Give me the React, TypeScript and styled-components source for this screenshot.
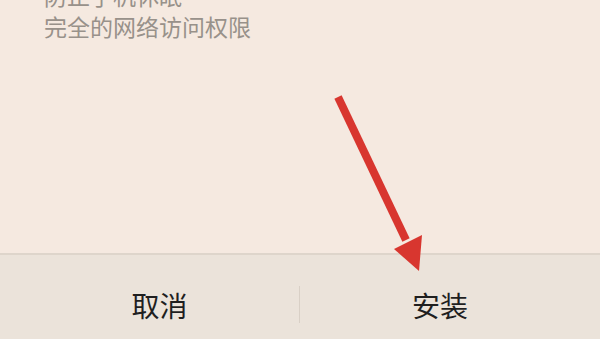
import styled, { createGlobalStyle } from 'styled-components';

const GlobalStyle = createGlobalStyle`
  html, body {
    margin: 0;
    padding: 0;
    height: 339px;
    overflow: hidden;
    background: #f5e9e0;
    font-family: "Noto Sans CJK SC", "Noto Sans", sans-serif;
  }
`;

const Screen = styled.div`
  position: relative;
  width: 600px;
  height: 339px;
  display: flex;
  flex-direction: column;
  overflow: hidden;
`;

const Content = styled.div`
  flex: 1;
  background: #f5e9e0;
  padding-left: 44px;
`;

const PermissionList = styled.ul`
  list-style: none;
  margin: -20px 0 0 0;
  padding: 0;
`;

const Permission = styled.li`
  font-size: 23px;
  line-height: 31px;
  color: #98918a;
`;

const ButtonBar = styled.div`
  height: 84px;
  flex-shrink: 0;
  display: grid;
  grid-template-columns: 299px 1px 1fr;
  align-items: start;
  background: #ebe3da;
  border-top: 2px solid #ded5cb;
`;

const ActionButton = styled.button<{ $side: 'left' | 'right' }>`
  border: 0;
  background: transparent;
  font-family: inherit;
  font-size: 28px;
  line-height: 40px;
  color: #1f1f1f;
  padding: 30px 0 0 0;
  padding-left: ${(p) => (p.$side === 'left' ? '20px' : '0')};
  padding-right: ${(p) => (p.$side === 'right' ? '20px' : '0')};
  text-align: center;
`;

const Separator = styled.div`
  width: 1px;
  height: 37px;
  margin-top: 31px;
  background: #d9d0c6;
`;

const Arrow = styled.svg`
  position: absolute;
  left: 0;
  top: 0;
  pointer-events: none;
`;

export default function App() {
  return (
    <Screen>
      <GlobalStyle />
      <Content>
        <PermissionList>
          <Permission>防止手机休眠</Permission>
          <Permission>完全的网络访问权限</Permission>
        </PermissionList>
      </Content>
      <ButtonBar>
        <ActionButton $side="left">取消</ActionButton>
        <Separator />
        <ActionButton $side="right">安装</ActionButton>
      </ButtonBar>
      <Arrow width="600" height="339" viewBox="0 0 600 339">
        <line x1="338" y1="97" x2="406" y2="240" stroke="#d8362f" strokeWidth="8" />
        <polygon points="394,249 422,235 419,271" fill="#d8362f" />
      </Arrow>
    </Screen>
  );
}
